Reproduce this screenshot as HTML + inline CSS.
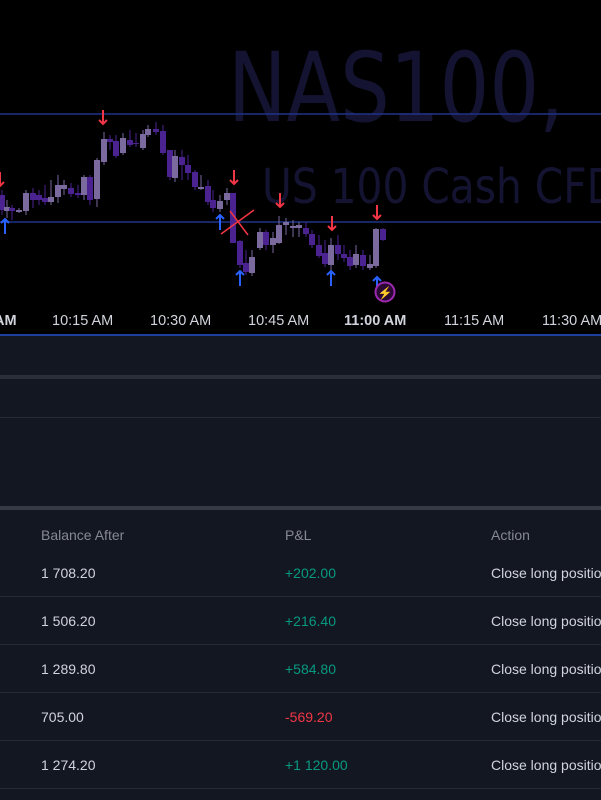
<!DOCTYPE html>
<html><head><meta charset="utf-8"><style>
*{margin:0;padding:0;box-sizing:border-box}
body{width:601px;height:800px;overflow:hidden;background:#131722;font-family:"Liberation Sans",Arial,sans-serif;position:relative}
#chart{position:absolute;left:0;top:0;width:601px;height:334px;background:#000}
.bl{position:absolute;left:0;top:334px;width:601px;height:2px;background:#1e3f9e}
.gb{position:absolute;left:0;width:601px}
.row{position:absolute;left:0;width:601px;height:48px;border-bottom:1px solid #262a34;font-size:14px;color:#d1d4dc;white-space:nowrap;overflow:hidden}
.row span{position:absolute;top:16px;white-space:nowrap}
.hd{color:#868993}
.g{color:#089981}.r{color:#f23645}
</style></head><body>
<svg id="chart" width="601" height="334" xmlns="http://www.w3.org/2000/svg">
<text x="228" y="121" font-family="DejaVu Sans, sans-serif" font-size="96" fill="#141432" textLength="336" lengthAdjust="spacingAndGlyphs">NAS100,</text>
<text x="262" y="203" font-family="DejaVu Sans, sans-serif" font-size="48" fill="#141432" textLength="356" lengthAdjust="spacingAndGlyphs">US 100 Cash CFD</text>
<line x1="0" y1="114" x2="601" y2="114" stroke="#1f3288" stroke-width="1.5"/>
<line x1="0" y1="222" x2="601" y2="222" stroke="#1f3288" stroke-width="1.5"/>
<g id="c"></g>
<g stroke="#f23645" stroke-width="2" fill="none" id="ra"></g>
<g stroke="#2962ff" stroke-width="2" fill="none" id="ba"></g>
<line x1="221" y1="234" x2="254" y2="210" stroke="#f23645" stroke-width="1.5"/>
<line x1="230" y1="211" x2="248" y2="235" stroke="#f23645" stroke-width="1.5"/>
<circle cx="385" cy="292" r="9.5" fill="#2a0a35" stroke="#9c27b0" stroke-width="2"/>
<text x="385" y="297" text-anchor="middle" font-size="12" fill="#b04ad0">⚡</text>
<g font-size="14.5" fill="#d1d4dc" font-family="Liberation Sans, sans-serif">
<text x="-6" y="325" font-weight="bold">AM</text>
<text x="52" y="325">10:15 AM</text>
<text x="150" y="325">10:30 AM</text>
<text x="248" y="325">10:45 AM</text>
<text x="344" y="325" font-weight="bold">11:00 AM</text>
<text x="444" y="325">11:15 AM</text>
<text x="542" y="325">11:30 AM</text>
</g>
</svg>
<div class="bl"></div>
<div class="gb" style="top:375px;height:4px;background:#2a2e39"></div>
<div class="gb" style="top:417px;height:1px;background:#262a34"></div>
<div class="gb" style="top:506px;height:4px;background:#363a45"></div>
<div class="row" style="top:510px;height:39px;border:none"><span class="hd" style="left:41px;top:17px">Balance After</span><span class="hd" style="left:285px;top:17px">P&amp;L</span><span class="hd" style="left:491px;top:17px">Action</span></div>
<div class="row" style="top:549px"><span style="left:41px">1 708.20</span><span class="g" style="left:285px">+202.00</span><span style="left:491px">Close long position</span></div>
<div class="row" style="top:597px"><span style="left:41px">1 506.20</span><span class="g" style="left:285px">+216.40</span><span style="left:491px">Close long position</span></div>
<div class="row" style="top:645px"><span style="left:41px">1 289.80</span><span class="g" style="left:285px">+584.80</span><span style="left:491px">Close long position</span></div>
<div class="row" style="top:693px"><span style="left:41px">705.00</span><span class="r" style="left:285px">-569.20</span><span style="left:491px">Close long position</span></div>
<div class="row" style="top:741px"><span style="left:41px">1 274.20</span><span class="g" style="left:285px">+1 120.00</span><span style="left:491px">Close long position</span></div>
<script>
var d=[[2,195,210,190,215,0],[7,207,211,200,218,1],[12,208,211,205,220,0],[19,210,212,208,213,1],[26,193,211,190,215,1],[33,193,200,188,208,0],[39,195,200,190,205,0],[45,198,202,185,205,0],[51,197,202,180,205,1],[58,185,197,175,203,1],[64,185,189,180,195,1],[71,188,194,183,197,0],[78,193,195,185,198,0],[84,177,195,175,200,1],[90,177,200,175,205,0],[97,160,199,158,207,1],[104,139,162,132,165,1],[110,139,142,135,150,0],[116,141,156,135,158,0],[123,138,153,133,155,1],[130,140,145,130,147,0],[136,143,144,133,147,0],[143,134,148,130,150,1],[148,129,135,125,137,1],[156,129,132,122,135,0],[163,131,153,125,155,0],[170,150,177,150,180,0],[175,156,178,150,182,1],[182,157,165,150,180,0],[188,165,173,155,180,0],[195,172,187,170,190,0],[201,187,189,175,190,1],[208,186,202,180,205,0],[213,200,208,190,212,0],[220,201,209,195,212,1],[227,193,200,188,205,1],[233,193,243,193,243,0],[240,241,265,240,268,0],[246,263,272,250,275,0],[252,257,273,250,276,1],[260,232,248,228,250,1],[266,232,245,230,250,0],[273,238,245,232,253,1],[279,225,243,216,244,1],[286,222,225,218,235,1],[293,226,228,220,237,1],[299,225,228,222,237,1],[306,228,234,222,237,0],[312,234,245,230,248,0],[319,245,256,235,258,0],[325,253,264,240,267,0],[331,245,265,238,270,1],[338,245,254,235,260,0],[344,254,258,245,262,0],[350,257,266,250,270,0],[356,254,265,245,268,1],[363,255,266,250,270,0],[370,264,268,255,270,1],[376,229,266,228,268,1],[383,229,240,228,241,0]];
var s='';d.forEach(function(c){var col=c[5]?'#7a6a9e':'#4b2390';s+='<line x1="'+c[0]+'" y1="'+c[3]+'" x2="'+c[0]+'" y2="'+c[4]+'" stroke="'+col+'" stroke-width="1"/><rect x="'+(c[0]-3)+'" y="'+c[1]+'" width="6" height="'+Math.max(1,c[2]-c[1])+'" fill="'+col+'"/>';});
document.getElementById('c').innerHTML=s;
var r=[[103,110],[0,172],[234,170],[280,193],[332,216],[377,205]],b=[[5,219],[220,215],[240,271],[331,271],[377,277]],rs='',bs='';
r.forEach(function(a){rs+='<path d="M'+a[0]+' '+a[1]+'V'+(a[1]+14)+'M'+(a[0]-4)+' '+(a[1]+10)+'L'+a[0]+' '+(a[1]+14)+'L'+(a[0]+4)+' '+(a[1]+10)+'"/>';});
b.forEach(function(a){bs+='<path d="M'+a[0]+' '+(a[1]+15)+'V'+a[1]+'M'+(a[0]-4)+' '+(a[1]+4)+'L'+a[0]+' '+a[1]+'L'+(a[0]+4)+' '+(a[1]+4)+'"/>';});
document.getElementById('ra').innerHTML=rs;document.getElementById('ba').innerHTML=bs;
</script>
</body></html>
